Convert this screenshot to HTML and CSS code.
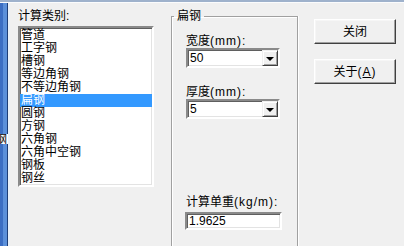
FILE: index.html
```html
<!DOCTYPE html>
<html lang="zh-CN">
<head>
<meta charset="utf-8">
<title>计算</title>
<link rel="stylesheet" href="styles.css">
</head>
<body>
<div class="window">
  <div class="topbar"></div>
  <div class="body">
    <div class="edge"><span class="ghost">钢</span></div>
    <div class="content">
      <section class="category">
        <div class="label">计算类别:</div>
        <ul class="listbox">
          <li>管道</li>
          <li>工字钢</li>
          <li>槽钢</li>
          <li>等边角钢</li>
          <li>不等边角钢</li>
          <li class="selected">扁钢</li>
          <li>圆钢</li>
          <li>方钢</li>
          <li>六角钢</li>
          <li>六角中空钢</li>
          <li>钢板</li>
          <li>钢丝</li>
        </ul>
      </section>
      <fieldset class="group">
        <legend>扁钢</legend>
        <div class="field first">
          <div class="flabel">宽度<span class="lat">(mm):</span></div>
          <div class="combo"><span class="value">50</span><span class="drop"><span class="arrow"></span></span></div>
        </div>
        <div class="field second">
          <div class="flabel">厚度<span class="lat">(mm):</span></div>
          <div class="combo"><span class="value">5</span><span class="drop"><span class="arrow"></span></span></div>
        </div>
        <div class="field weight">
          <div class="flabel">计算单重<span class="lat">(kg/m):</span></div>
          <div class="textbox"><span class="value">1.9625</span></div>
        </div>
      </fieldset>
      <div class="buttons">
        <button class="btn">关闭</button>
        <button class="btn">关于<span class="lat">(<u>A</u>)</span></button>
      </div>
    </div>
  </div>
</div>
</body>
</html>
```

FILE: styles.css
```css
* { box-sizing: border-box; }
html, body { margin: 0; padding: 0; }
body {
  width: 404px;
  height: 246px;
  overflow: hidden;
  background: #f0f0f0;
  font-family: "Liberation Sans", "Noto Sans CJK SC", sans-serif;
  font-size: 12px;
  color: #000;
}
.window {
  width: 404px;
  height: 246px;
  display: flex;
  flex-direction: column;
  background: #f0f0f0;
  overflow: hidden;
}
.topbar {
  height: 3px;
  flex: none;
  background: linear-gradient(to bottom, #9fb2cc 0 2px, #fbfcfd 2px 3px);
}
.body {
  flex: 1;
  display: flex;
  min-height: 0;
}
.edge {
  position: relative;
  width: 10px;
  flex: none;
  background: linear-gradient(to right, #3b6ec3 0 3px, #5b90da 3px 7px, #1d3e78 7px 8px, #eaf0f7 8px 10px);
}
.ghost {
  position: absolute;
  left: 0;
  top: 131px;
  width: 8px;
  height: 10px;
  overflow: hidden;
  background: #fff;
  font-family: "Noto Sans CJK SC", sans-serif;
  font-size: 12px;
  line-height: 10px;
  text-indent: -5px;
  white-space: nowrap;
}
.content {
  flex: 1;
  display: flex;
  align-items: flex-start;
  padding-top: 7px;
  min-height: 0;
}
.category {
  margin-left: 8px;
  display: flex;
  flex-direction: column;
}
.label {
  line-height: 13px;
  height: 13px;
}
.listbox {
  list-style: none;
  margin: 3px 0 0 0;
  padding: 1px 0 0 0;
  width: 136px;
  height: 161px;
  background: #fff;
  border-style: solid;
  border-width: 2px;
  border-color: #8a8a8a #fff #fff #8a8a8a;
  box-shadow: inset 1px 1px 0 #5f5f5f, inset -1px -1px 0 #e3e3e3;
  overflow: hidden;
}
.listbox li {
  height: 13px;
  line-height: 13px;
  padding-left: 1px;
  white-space: nowrap;
}
.listbox li.selected {
  background: #3399ff;
  color: #fff;
}
.group {
  margin: 0 0 0 17px;
  padding: 0 0 0 14px;
  width: 127px;
  align-self: stretch;
  border: 1px solid #a0a0a0;
  border-bottom: none;
  box-shadow: inset 1px 1px 0 #fff, 1px 0 0 #fff;
  flex: none;
  min-width: 0;
}
.group legend {
  padding: 0 3px;
  margin-left: -12px;
  line-height: 13px;
}
.field {
  display: flex;
  flex-direction: column;
}
.field.first { margin-top: 12px; }
.field.second { margin-top: 18px; }
.field.weight { margin-top: 77px; }
.flabel {
  line-height: 13px;
  height: 13px;
  white-space: nowrap;
}
.lat { letter-spacing: 1px; }
.combo, .textbox {
  display: flex;
  align-items: center;
  background: #fff;
  border-style: solid;
  border-width: 2px;
  border-color: #8a8a8a #fff #fff #8a8a8a;
  box-shadow: inset 1px 1px 0 #5f5f5f, inset -1px -1px 0 #e3e3e3;
}
.combo {
  width: 94px;
  height: 20px;
  justify-content: space-between;
}
.textbox {
  margin-top: 3px;
  margin-left: -1px;
  width: 97px;
  height: 18px;
}
.value {
  padding-left: 2px;
  font-size: 12px;
  line-height: 14px;
}
.drop {
  width: 16px;
  height: 16px;
  background: #f0f0f0;
  border-style: solid;
  border-width: 1px;
  border-color: #f0f0f0 #404040 #404040 #f0f0f0;
  box-shadow: inset 1px 1px 0 #fff, inset -1px -1px 0 #a0a0a0;
  display: flex;
  align-items: center;
  justify-content: center;
}
.arrow {
  width: 0;
  height: 0;
  border-left: 4px solid transparent;
  border-right: 4px solid transparent;
  border-top: 4px solid #000;
  margin-top: 1px;
}
.buttons {
  margin-left: 16px;
  margin-top: 9px;
  display: flex;
  flex-direction: column;
  gap: 15px;
}
.btn {
  width: 82px;
  height: 25px;
  padding: 0;
  margin: 0;
  background: #f0f0f0;
  font-family: "Liberation Sans", "Noto Sans CJK SC", sans-serif;
  font-size: 12px;
  color: #000;
  border-style: solid;
  border-width: 1px;
  border-color: #fff #404040 #404040 #fff;
  box-shadow: inset -1px -1px 0 #a0a0a0, inset 1px 1px 0 #f6f6f6;
  line-height: 14px;
}
```
